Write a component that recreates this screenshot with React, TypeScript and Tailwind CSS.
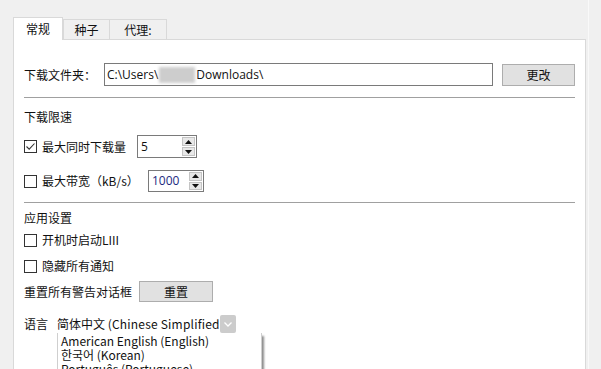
import React from 'react'

// Windows-style settings dialog: "常规" tab with download / speed / app / language groups.

function CheckBox({ checked }: { checked?: boolean }) {
  return (
    <span className="flex h-[13px] w-[13px] shrink-0 items-center justify-center border border-[#333333] bg-white">
      {checked && (
        <svg width="11" height="11" viewBox="0 0 11 11">
          <path d="M1.5 5.5 L4.2 8.2 L9.5 2.5" fill="none" stroke="#333" strokeWidth="1.1" />
        </svg>
      )}
    </span>
  )
}

function SpinBox({ value, className, textClass }: { value: string; className: string; textClass: string }) {
  return (
    <div className={className}>
      <span className={textClass}>{value}</span>
      <div className="my-[1px] mr-[1px] flex w-[13px] flex-col gap-px">
        <span className="flex flex-1 items-center justify-center border border-[#c4c4c4] bg-[#e8e8e8]">
          <svg width="7" height="4" viewBox="0 0 7 4">
            <path d="M0 4 L3.5 0 L7 4 Z" fill="#111" />
          </svg>
        </span>
        <span className="flex flex-1 items-center justify-center border border-[#c4c4c4] bg-[#e8e8e8]">
          <svg width="7" height="4" viewBox="0 0 7 4">
            <path d="M0 0 L3.5 4 L7 0 Z" fill="#111" />
          </svg>
        </span>
      </div>
    </div>
  )
}

export default function App() {
  return (
    <div className="flex h-[369px] w-[601px] overflow-hidden bg-[#f0f0f0] font-[family-name:'Noto_Sans_CJK_SC','Noto_Sans',sans-serif] text-[12px] text-[#111]">
      <div className="flex w-[586px] shrink-0 flex-col pl-[13px] pt-[17px]">
        {/* tabs */}
        <div className="relative z-10 -mb-px flex h-[23px] items-end">
          <div className="flex h-[23px] w-[50px] items-center justify-center border border-b-0 border-[#d9d9d9] bg-white pb-[1px] leading-none">
            常规
          </div>
          <div className="flex h-[21px] w-[47px] items-center justify-center border border-[#d9d9d9] bg-[#f0f0f0] leading-none">
            种子
          </div>
          <div className="flex h-[21px] w-[57px] items-center justify-center border border-l-0 border-[#d9d9d9] bg-[#f0f0f0] leading-none">
            代理:
          </div>
        </div>

        {/* panel */}
        <div className="flex flex-1 flex-col border border-b-0 border-[#d9d9d9] bg-white px-[10px]">
          <div className="mt-[23px] flex h-[23px] items-center">
            <span className="w-[80px]">下载文件夹：</span>
            <div className="flex h-[23px] w-[389px] items-center border border-[#7a7a7a] pl-[2px] font-[family-name:'Open_Sans',sans-serif] text-[12px]">
              <span>C:\Users\</span>
              <span className="mx-[1px] h-[16px] w-[36px] bg-[#cdcdcd] blur-[1.5px]" />
              <span>Downloads\</span>
            </div>
            <button className="ml-[9px] flex h-[22px] w-[73px] items-center justify-center border border-[#adadad] bg-[#e1e1e1]">
              更改
            </button>
          </div>

          <div className="mt-[11px] h-px bg-[#a0a0a0]" />

          <div className="mt-[11px] h-[16px] leading-[16px]">下载限速</div>

          <div className="mt-[10px] flex h-[23px] items-center">
            <CheckBox checked />
            <span className="ml-[5px] w-[95px]">最大同时下载量</span>
            <SpinBox
              value="5"
              className="flex h-[23px] w-[60px] border border-[#7a7a7a] bg-white"
              textClass="flex flex-1 items-center pl-[3px] font-[family-name:'Open_Sans',sans-serif]"
            />
          </div>

          <div className="mt-[12px] flex h-[22px] items-center">
            <CheckBox />
            <span className="ml-[5px] w-[106px]">最大带宽（kB/s）</span>
            <SpinBox
              value="1000"
              className="flex h-[22px] w-[56px] border border-[#7a7a7a] bg-white"
              textClass="flex flex-1 items-center pl-[3px] font-[family-name:'Open_Sans',sans-serif] text-[#1c2a80]"
            />
          </div>

          <div className="mt-[10px] h-px bg-[#a0a0a0]" />

          <div className="mt-[7px] h-[16px] leading-[16px]">应用设置</div>

          <div className="mt-[6px] flex h-[16px] items-center">
            <CheckBox />
            <span className="ml-[5px]">开机时启动LIII</span>
          </div>

          <div className="mt-[10px] flex h-[16px] items-center">
            <CheckBox />
            <span className="ml-[5px]">隐藏所有通知</span>
          </div>

          <div className="mt-[7px] flex h-[21px] items-center">
            <span className="w-[115px]">重置所有警告对话框</span>
            <button className="flex h-[21px] w-[74px] items-center justify-center border border-[#adadad] bg-[#e1e1e1]">
              重置
            </button>
          </div>

          <div className="mt-[13px] flex h-[18px] items-center">
            <span className="w-[33px]">语言</span>
            <div className="relative flex h-[18px] w-[179px] items-center">
              <span className="flex-1 overflow-hidden whitespace-nowrap">
                简体中文 <span className="tracking-[0.2px]">(Chinese Simplified Han)</span>
              </span>
              <span className="flex h-[18px] w-[16px] shrink-0 items-center justify-center rounded-[2px] bg-[#cccccc]">
                <svg width="8" height="5" viewBox="0 0 8 5">
                  <path d="M0.5 0.5 L4 4 L7.5 0.5" fill="none" stroke="#fff" strokeWidth="1.3" />
                </svg>
              </span>

              {/* open dropdown list */}
              <div className="absolute left-0 top-[18px] z-20 flex h-[60px] w-[205px] flex-col border-x border-[#cfcfcf] bg-white pl-[3px] pt-[1px] leading-[14px] shadow-[2px_3px_2px_rgba(0,0,0,0.45)]">
                <span>American English (English)</span>
                <span>한국어 (Korean)</span>
                <span>Português (Portuguese)</span>
              </div>
            </div>
          </div>
        </div>
      </div>
      <div className="ml-[2px] w-px bg-[#f9f9f9]" />
    </div>
  )
}
